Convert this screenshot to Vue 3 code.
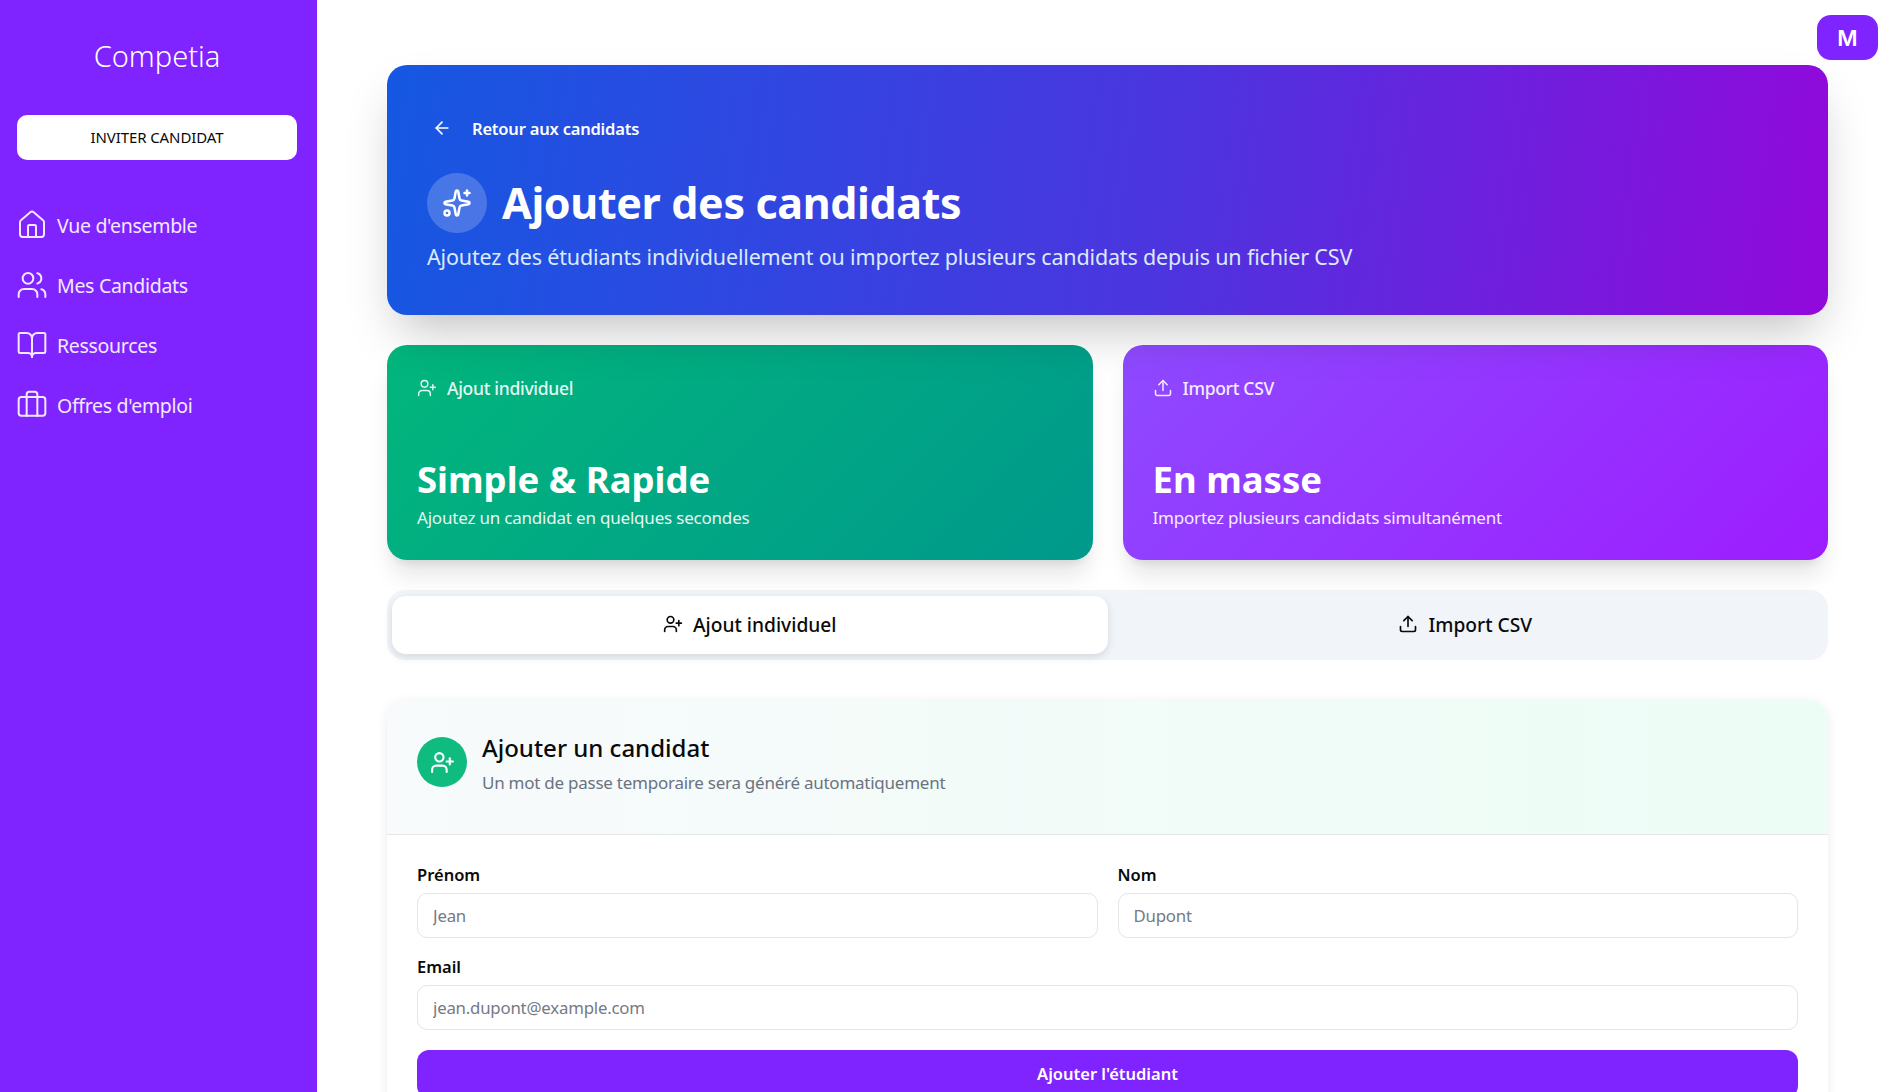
<script setup>
const navItems = [
  {
    label: "Vue d'ensemble",
    icon: '<path d="M15 21v-8a1 1 0 0 0-1-1h-4a1 1 0 0 0-1 1v8"/><path d="M3 10a2 2 0 0 1 .709-1.528l7-5.999a2 2 0 0 1 2.582 0l7 5.999A2 2 0 0 1 21 10v9a2 2 0 0 1-2 2H5a2 2 0 0 1-2-2z"/>'
  },
  {
    label: 'Mes Candidats',
    icon: '<path d="M16 21v-2a4 4 0 0 0-4-4H6a4 4 0 0 0-4 4v2"/><circle cx="9" cy="7" r="4"/><path d="M22 21v-2a4 4 0 0 0-3-3.87"/><path d="M16 3.13a4 4 0 0 1 0 7.75"/>'
  },
  {
    label: 'Ressources',
    icon: '<path d="M12 7v14"/><path d="M3 18a1 1 0 0 1-1-1V4a1 1 0 0 1 1-1h5a4 4 0 0 1 4 4 4 4 0 0 1 4-4h5a1 1 0 0 1 1 1v13a1 1 0 0 1-1 1h-6a3 3 0 0 0-3 3 3 3 0 0 0-3-3z"/>'
  },
  {
    label: "Offres d'emploi",
    icon: '<path d="M16 20V4a2 2 0 0 0-2-2h-4a2 2 0 0 0-2 2v16"/><rect width="20" height="14" x="2" y="6" rx="2"/>'
  }
]

const userPlus = '<path d="M16 21v-2a4 4 0 0 0-4-4H6a4 4 0 0 0-4 4v2"/><circle cx="9" cy="7" r="4"/><line x1="19" x2="19" y1="8" y2="14"/><line x1="22" x2="16" y1="11" y2="11"/>'
const upload = '<path d="M21 15v4a2 2 0 0 1-2 2H5a2 2 0 0 1-2-2v-4"/><polyline points="17 8 12 3 7 8"/><line x1="12" x2="12" y1="3" y2="15"/>'
const sparkles = '<path d="M11.017 2.814a1 1 0 0 1 1.966 0l1.051 5.558a2 2 0 0 0 1.594 1.594l5.558 1.051a1 1 0 0 1 0 1.966l-5.558 1.051a2 2 0 0 0-1.594 1.594l-1.051 5.558a1 1 0 0 1-1.966 0l-1.051-5.558a2 2 0 0 0-1.594-1.594l-5.558-1.051a1 1 0 0 1 0-1.966l5.558-1.051a2 2 0 0 0 1.594-1.594z"/><path d="M20 2v4"/><path d="M22 4h-4"/><circle cx="4" cy="20" r="2"/>'
const arrowLeft = '<path d="m12 19-7-7 7-7"/><path d="M19 12H5"/>'

const summaries = [
  { cls: 'green', icon: userPlus, badge: 'Ajout individuel', title: 'Simple & Rapide', text: 'Ajoutez un candidat en quelques secondes' },
  { cls: 'violet', icon: upload, badge: 'Import CSV', title: 'En masse', text: 'Importez plusieurs candidats simultanément' }
]
</script>

<template>
  <div class="layout">
    <aside class="sidebar">
      <div class="brand">Competia</div>
      <button class="invite">INVITER CANDIDAT</button>
      <nav class="nav">
        <a v-for="item in navItems" :key="item.label" class="nav-item">
          <svg class="nav-icon" viewBox="0 0 24 24" v-html="item.icon"></svg>
          <span>{{ item.label }}</span>
        </a>
      </nav>
    </aside>

    <main class="main">
      <header class="hero">
        <a class="back">
          <svg class="back-icon" viewBox="0 0 24 24" v-html="arrowLeft"></svg>
          <span>Retour aux candidats</span>
        </a>
        <div class="hero-title">
          <span class="hero-circle">
            <svg viewBox="0 0 24 24" v-html="sparkles"></svg>
          </span>
          <h1>Ajouter des candidats</h1>
        </div>
        <p class="hero-sub">Ajoutez des étudiants individuellement ou importez plusieurs candidats depuis un fichier CSV</p>
      </header>

      <section class="summary">
        <article v-for="card in summaries" :key="card.title" class="summary-card" :class="card.cls">
          <div class="badge">
            <svg viewBox="0 0 24 24" v-html="card.icon"></svg>
            <span>{{ card.badge }}</span>
          </div>
          <h2>{{ card.title }}</h2>
          <p>{{ card.text }}</p>
        </article>
      </section>

      <div class="tabs">
        <button class="tab active">
          <svg viewBox="0 0 24 24" v-html="userPlus"></svg>
          <span>Ajout individuel</span>
        </button>
        <button class="tab">
          <svg viewBox="0 0 24 24" v-html="upload"></svg>
          <span>Import CSV</span>
        </button>
      </div>

      <section class="form-card">
        <div class="form-head">
          <span class="form-circle">
            <svg viewBox="0 0 24 24" v-html="userPlus"></svg>
          </span>
          <div>
            <h3>Ajouter un candidat</h3>
            <p>Un mot de passe temporaire sera généré automatiquement</p>
          </div>
        </div>
        <form class="form-body" @submit.prevent>
          <div class="row">
            <label class="field">
              <span>Prénom</span>
              <input type="text" placeholder="Jean" />
            </label>
            <label class="field">
              <span>Nom</span>
              <input type="text" placeholder="Dupont" />
            </label>
          </div>
          <label class="field">
            <span>Email</span>
            <input type="email" placeholder="jean.dupont@example.com" />
          </label>
          <button class="submit" type="submit">Ajouter l'étudiant</button>
        </form>
      </section>
    </main>

    <button class="avatar">M</button>
  </div>
</template>

<style>
html, body {
  overflow: hidden;
  background: #fff;
}
</style>

<style scoped>
* {
  box-sizing: border-box;
}

.layout {
  display: flex;
  height: 100vh;
  overflow: hidden;
  font-family: "Noto Sans", "Open Sans", sans-serif;
  color: #0a0a0a;
}

svg {
  fill: none;
  stroke: currentColor;
  stroke-width: 2;
  stroke-linecap: round;
  stroke-linejoin: round;
  flex-shrink: 0;
}

.sidebar {
  width: 317px;
  flex-shrink: 0;
  background: #8024ff;
  color: #fff;
  padding: 35px 20px 0 17px;
}

.brand {
  font-size: 29px;
  line-height: 42px;
  font-weight: 300;
  text-align: center;
}

.invite {
  display: block;
  width: 100%;
  height: 45px;
  margin-top: 38px;
  padding: 0 0 2px;
  border: 0;
  border-radius: 10px;
  background: #fff;
  color: #0a0a0a;
  font: inherit;
  font-size: 15px;
  letter-spacing: -0.1px;
}

.nav {
  margin-top: 35px;
  display: flex;
  flex-direction: column;
}

.nav-item {
  display: flex;
  align-items: center;
  gap: 9px;
  height: 60px;
  font-size: 19.5px;
  font-weight: 400;
  letter-spacing: -0.3px;
  color: #f3e9ff;
}

.nav-icon {
  width: 32px;
  height: 32px;
  margin-left: -1px;
  stroke-width: 1.5;
}

.main {
  flex: 1;
  min-width: 0;
  padding: 65px 68px 0 70px;
}

.hero {
  position: relative;
  height: 250px;
  padding: 46px 40px 0;
  border-radius: 20px;
  color: #fff;
  background: linear-gradient(98deg, #1558e2 0%, #4d34df 55%, #9209db 100%);
  box-shadow: 0 25px 50px -12px rgba(0, 0, 0, 0.25);
}

.back {
  display: flex;
  align-items: center;
  gap: 20px;
  height: 34px;
  font-size: 16.5px;
  font-weight: 600;
  letter-spacing: -0.2px;
}

.back-icon {
  width: 20px;
  height: 20px;
  margin-left: 5px;
}

.hero-title {
  display: flex;
  align-items: center;
  gap: 15px;
  margin-top: 25px;
}

.hero-circle {
  width: 60px;
  height: 60px;
  border-radius: 50%;
  background: rgba(255, 255, 255, 0.2);
  display: flex;
  align-items: center;
  justify-content: center;
}

.hero-circle svg {
  width: 30px;
  height: 30px;
}

.hero-title h1 {
  margin: 0;
  font-size: 43px;
  line-height: 66px;
  font-weight: 700;
  letter-spacing: -0.36px;
}

.hero-sub {
  margin: 6px 0 0;
  font-size: 21.5px;
  line-height: 30px;
  font-weight: 400;
  letter-spacing: -0.16px;
  color: #dbeafe;
}

.summary {
  display: grid;
  grid-template-columns: 1fr 1fr;
  gap: 30px;
  margin-top: 30px;
}

.summary-card {
  height: 215px;
  padding: 30px 30px 0;
  border-radius: 20px;
  color: #fff;
  box-shadow: 0 20px 25px -5px rgba(0, 0, 0, 0.1), 0 8px 10px -6px rgba(0, 0, 0, 0.1);
}

.summary-card.green {
  background: linear-gradient(135deg, #02b67c, #00998c);
}

.summary-card.violet {
  background: linear-gradient(135deg, #8e4aff, #9d1dff);
}

.badge {
  display: flex;
  align-items: center;
  gap: 10px;
  height: 26px;
  font-size: 17.5px;
  font-weight: 500;
  letter-spacing: -0.3px;
  opacity: 0.9;
}

.badge svg {
  width: 20px;
  height: 20px;
  stroke-width: 1.8;
}

.summary-card h2 {
  margin: 53px 0 0;
  font-size: 36.5px;
  line-height: 50px;
  font-weight: 700;
}

.summary-card p {
  margin: 1px 0 0;
  font-size: 17px;
  line-height: 26px;
  font-weight: 400;
  letter-spacing: -0.2px;
  opacity: 0.9;
}

.tabs {
  display: flex;
  height: 70px;
  margin-top: 30px;
  padding: 6px 5px;
  border-radius: 18px;
  background: #f1f5f9;
}

.tab {
  flex: 1;
  display: flex;
  align-items: center;
  justify-content: center;
  gap: 10px;
  padding: 0 0 2px;
  border: 0;
  border-radius: 14px;
  background: transparent;
  color: #0a0a0a;
  font: inherit;
  font-size: 19.2px;
  font-weight: 500;
}

.tab svg {
  width: 20px;
  height: 20px;
}

.tab.active {
  background: #fff;
  box-shadow: 0 3px 8px rgba(0, 0, 0, 0.12);
}

.form-card {
  margin-top: 40px;
  border-radius: 20px;
  background: #fff;
  box-shadow: 0 2px 12px rgba(0, 0, 0, 0.08);
  overflow: hidden;
}

.form-head {
  display: flex;
  align-items: center;
  gap: 15px;
  padding: 31px 30px 39px;
  background: linear-gradient(90deg, #f8fafc, #ecfdf5);
  border-bottom: 1px solid #e5e7eb;
}

.form-circle {
  width: 50px;
  height: 50px;
  margin-top: -2px;
  border-radius: 50%;
  background: #10bb80;
  color: #fff;
  display: flex;
  align-items: center;
  justify-content: center;
}

.form-circle svg {
  width: 25px;
  height: 25px;
}

.form-head h3 {
  margin: 0;
  font-size: 24px;
  line-height: 34px;
  font-weight: 500;
}

.form-head p {
  margin: 6px 0 0;
  font-size: 17px;
  line-height: 24px;
  font-weight: 400;
  letter-spacing: -0.25px;
  color: #6b7280;
}

.form-body {
  padding: 28px 30px 30px;
  display: flex;
  flex-direction: column;
  gap: 17px;
}

.row {
  display: grid;
  grid-template-columns: 1fr 1fr;
  gap: 20px;
}

.field {
  display: flex;
  flex-direction: column;
  gap: 6px;
}

.field span {
  font-size: 16.5px;
  line-height: 24px;
  font-weight: 600;
}

.field input {
  height: 45px;
  padding: 0 15px;
  border: 1px solid #e2e4e8;
  border-radius: 10px;
  outline: none;
  font: inherit;
  font-size: 16.8px;
  font-weight: 400;
  letter-spacing: -0.2px;
}

.field input::placeholder {
  color: #757a85;
  opacity: 1;
}

.submit {
  height: 48px;
  margin-top: 3px;
  padding: 0 0 2px;
  border: 0;
  border-radius: 12px;
  background: #8024ff;
  color: #fff;
  font: inherit;
  font-size: 16.5px;
  font-weight: 600;
}

.avatar {
  position: fixed;
  top: 15px;
  right: 18px;
  width: 61px;
  height: 45px;
  border: 0;
  border-radius: 14px;
  background: #8024ff;
  color: #fff;
  font-family: Inter, sans-serif;
  font-size: 22px;
  font-weight: 600;
}
</style>
